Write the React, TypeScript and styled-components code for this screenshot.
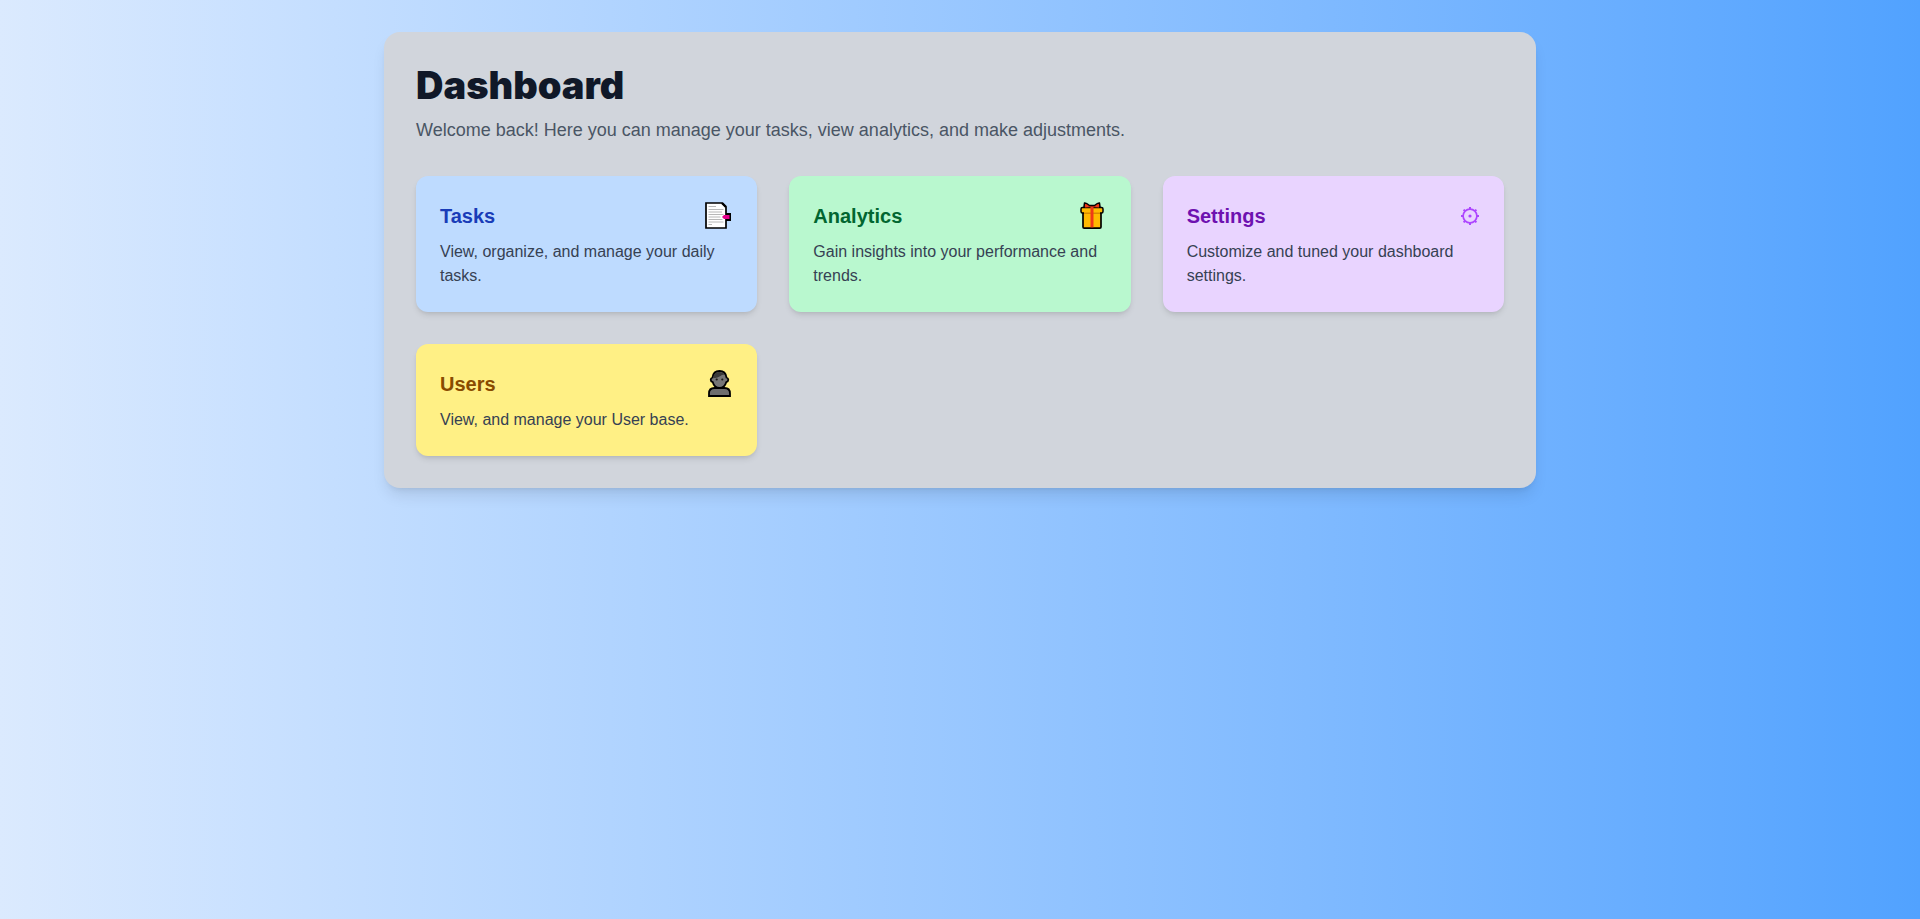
import React from "react";
import styled, { createGlobalStyle } from "styled-components";

const GlobalStyle = createGlobalStyle`
  *, *::before, *::after { box-sizing: border-box; }
  body {
    margin: 0;
    font-family: Arial, "Liberation Sans", sans-serif;
    font-size: 16px;
    line-height: 24px;
  }
  h1, h2, p { margin: 0; }
`;

const Page = styled.div`
  min-height: 100vh;
  padding: 32px;
  background: linear-gradient(to right in oklab, #dbeafe, #51a2ff);
`;

const Panel = styled.main`
  max-width: 1152px;
  margin: 0 auto;
  padding: 32px;
  border-radius: 16px;
  background: #d1d5dc;
  box-shadow: 0 10px 15px -3px rgba(0, 0, 0, 0.1), 0 4px 6px -4px rgba(0, 0, 0, 0.1);
`;

const Title = styled.h1`
  margin-bottom: 10px;
  color: #101828;
  font-family: "Arial Black", Inter, sans-serif;
  font-size: 38px;
  font-weight: 900;
  line-height: 42px;
`;

const Intro = styled.p`
  margin-bottom: 32px;
  color: #4a5565;
  font-size: 18px;
  line-height: 28px;
`;

const CardGrid = styled.div`
  display: grid;
  grid-template-columns: repeat(3, minmax(0, 1fr));
  align-items: start;
  gap: 32px;

  @media (max-width: 1023px) {
    grid-template-columns: repeat(2, minmax(0, 1fr));
  }
  @media (max-width: 639px) {
    grid-template-columns: minmax(0, 1fr);
  }
`;

const Card = styled.section<{ $bg: string }>`
  padding: 24px;
  border-radius: 12px;
  background: ${(p) => p.$bg};
  box-shadow: 0 4px 6px -1px rgba(0, 0, 0, 0.1), 0 2px 4px -2px rgba(0, 0, 0, 0.1);
`;

const CardHeader = styled.div`
  display: flex;
  align-items: center;
  justify-content: space-between;
  height: 32px;
  margin-bottom: 8px;
`;

const CardTitle = styled.h2<{ $color: string }>`
  color: ${(p) => p.$color};
  font-size: 20px;
  font-weight: 700;
  line-height: 28px;
`;

const CardText = styled.p`
  color: #364153;
`;

const Icon = styled.svg`
  display: block;
  flex: none;
`;

const TasksIcon = () => (
  <Icon width="28" height="28" viewBox="0 0 28 28" aria-hidden="true">
    <path d="M20 11h6v8h-6z" fill="#000" />
    <path d="M1 1h16l4 4v21H1z" fill="#fff" stroke="#000" strokeWidth="1.700" />
    <path d="M17 1l4 4" stroke="#000" strokeWidth="2.400" />
    <path d="M3.500 4.500h7.500M3.500 7.500h15M3.500 10h13.500M3.500 12.500h15M3.500 15h12M3.500 17.500h14M3.500 20h15M3.500 22.500h3.500" stroke="#b8b8b8" />
    <path d="M17 15l2-2h5.500v4H19z" fill="#e3008c" />
  </Icon>
);

const AnalyticsIcon = () => (
  <Icon width="27" height="28" viewBox="0 0 27 28" aria-hidden="true">
    <path d="M3.700 7L4.500 1q1.500-.500 5 2.500h5q3.500-3 5-2.500l.800 6z" fill="#f03a17" stroke="#000" strokeWidth="1.500" strokeLinejoin="round" />
    <path d="M3 9.500h18V25q0 1.200-1.200 1.200H4.200Q3 26.200 3 25z" fill="#ffb900" stroke="#000" strokeWidth="1.700" />
    <rect x="1" y="5.500" width="22" height="5.500" rx="1.500" fill="#ffb900" stroke="#000" strokeWidth="1.500" />
    <path d="M4 9h16v4H4z" fill="#ffb900" />
    <path d="M4 10.500h16V12H4z" fill="#d88a00" />
    <path d="M5 5.500L5.500 2.500 9 4.800h6l3.500-2.300.500 3-4-.300H9z" fill="#f03a17" />
    <path d="M10.500 5h3v20.300h-3z" fill="#f03a17" />
  </Icon>
);

const SettingsIcon = () => (
  <Icon width="19" height="28" viewBox="0 0 19 28" fill="none" stroke="#ad46ff" aria-hidden="true">
    <circle cx="9" cy="14" r="6.900" strokeWidth="1.700" />
    <path d="M9 5v2M9 21v2M0 14h2M16 14h2M2.600 7.600L4 9M14 19l1.400 1.400M15.400 7.600L14 9M4 19l-1.400 1.400" strokeWidth="2" />
    <circle cx="9" cy="14" r="1.600" fill="#ad46ff" stroke="none" />
  </Icon>
);

const UsersIcon = () => (
  <Icon width="25" height="28" viewBox="0 0 25 28" aria-hidden="true">
    <path d="M1 26v-2.500Q1 18 6.500 18h10q5.500 0 5.500 5.500V26z" fill="#6e6e6e" stroke="#000" strokeWidth="1.800" />
    <path d="M11.500 1C15.500 1 18 3.800 18.500 7.500Q20.300 8 20.300 9.800T18.200 12.200C17.300 15.500 14.800 18 11.500 18S5.700 15.500 4.800 12.200Q2.700 11.600 2.700 9.800T4.500 7.500C5 3.800 7.500 1 11.500 1z" fill="#767676" stroke="#000" strokeWidth="1.800" />
    <path d="M5.200 7.800Q6 2 11.500 2q3.500 0 5.300 2.500-3 .200-5.300 2Q9 8.500 5.200 7.800z" fill="#3a3a3a" />
    <circle cx="8.700" cy="9.500" r="1.100" fill="#1c1c1c" />
    <circle cx="14.300" cy="9.500" r="1.100" fill="#1c1c1c" />
  </Icon>
);

const cards = [
  { title: "Tasks", text: "View, organize, and manage your daily tasks.", bg: "#bedbff", color: "#193cb8", icon: <TasksIcon /> },
  { title: "Analytics", text: "Gain insights into your performance and trends.", bg: "#b9f8cf", color: "#016630", icon: <AnalyticsIcon /> },
  { title: "Settings", text: "Customize and tuned your dashboard settings.", bg: "#e9d4ff", color: "#6e11b0", icon: <SettingsIcon /> },
  { title: "Users", text: "View, and manage your User base.", bg: "#fff085", color: "#894b00", icon: <UsersIcon /> },
];

export default function App() {
  return (
    <>
      <GlobalStyle />
      <Page>
        <Panel>
          <Title>Dashboard</Title>
          <Intro>Welcome back! Here you can manage your tasks, view analytics, and make adjustments.</Intro>
          <CardGrid>
            {cards.map((card) => (
              <Card key={card.title} $bg={card.bg}>
                <CardHeader>
                  <CardTitle $color={card.color}>{card.title}</CardTitle>
                  {card.icon}
                </CardHeader>
                <CardText>{card.text}</CardText>
              </Card>
            ))}
          </CardGrid>
        </Panel>
      </Page>
    </>
  );
}
